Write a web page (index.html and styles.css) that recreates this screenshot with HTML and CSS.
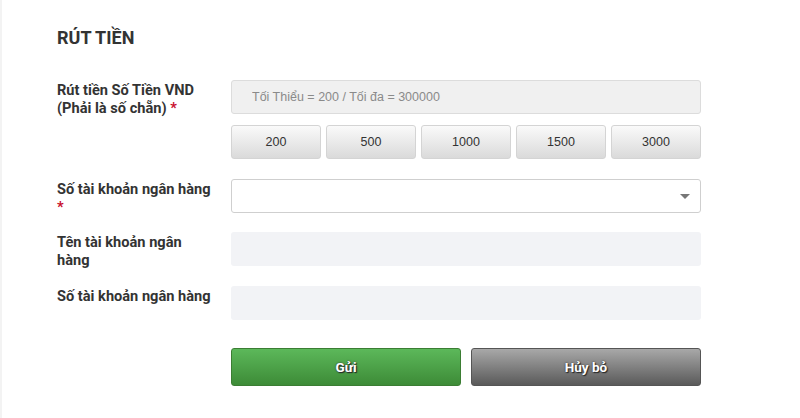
FILE: index.html
```html
<!DOCTYPE html>
<html>
<head>
<meta charset="utf-8">
<meta name="viewport" content="width=device-width, initial-scale=1">
<title>Rút tiền</title>
<link rel="stylesheet" href="styles.css">
</head>
<body>
  <div class="page">
    <h2 class="title">RÚT TIỀN</h2>
    <form class="form">
      <div class="row">
        <label class="label">Rút tiền Số Tiền VND (Phải là số chẵn) <span class="req">*</span></label>
        <div class="field">
          <input class="input amount" type="text" placeholder="Tối Thiểu = 200 / Tối đa = 300000">
          <div class="quick">
            <button type="button" class="quick-btn">200</button>
            <button type="button" class="quick-btn">500</button>
            <button type="button" class="quick-btn">1000</button>
            <button type="button" class="quick-btn">1500</button>
            <button type="button" class="quick-btn">3000</button>
          </div>
        </div>
      </div>
      <div class="row">
        <label class="label">Số tài khoản ngân hàng <span class="req">*</span></label>
        <div class="field">
          <div class="select">
            <span class="caret"></span>
          </div>
        </div>
      </div>
      <div class="row row-tight">
        <label class="label">Tên tài khoản ngân hàng</label>
        <div class="field">
          <input class="input readonly" type="text" readonly>
        </div>
      </div>
      <div class="row">
        <label class="label">Số tài khoản ngân hàng</label>
        <div class="field">
          <input class="input readonly" type="text" readonly>
        </div>
      </div>
      <div class="row actions">
        <div class="label"></div>
        <div class="field buttons">
          <button type="button" class="btn btn-send">Gửi</button>
          <button type="button" class="btn btn-cancel">Hủy bỏ</button>
        </div>
      </div>
    </form>
  </div>
</body>
</html>
```

FILE: styles.css
```css
body {
  margin: 0;
  background: #ffffff;
  font-family: Roboto, "Liberation Sans", sans-serif;
  color: #333333;
}
.page {
  border-left: 2px solid #f3f3f3;
  min-height: 418px;
  box-sizing: border-box;
  padding: 27px 0 0 55px;
}
.title {
  margin: 0 0 31px 0;
  font-size: 18px;
  font-weight: 700;
  line-height: 22px;
  color: #333333;
}
.form {
  display: flex;
  flex-direction: column;
  gap: 20px;
  width: 644px;
}
.row {
  display: flex;
  gap: 18px;
}
.row-tight {
  margin-top: -1px;
}
.label {
  width: 156px;
  flex: none;
  font-size: 14.6px;
  font-weight: 700;
  line-height: 18px;
  padding-top: 1px;
  margin-bottom: -6px;
  color: #333333;
}
.req {
  color: #c8102e;
}
.field {
  flex: 1;
  display: flex;
  flex-direction: column;
  gap: 11px;
}
.input {
  height: 34px;
  box-sizing: border-box;
  border-radius: 3px;
  font-family: "Liberation Sans", Arial, sans-serif;
  font-size: 12.5px;
  padding: 0 20px;
  outline: none;
}
.amount {
  background: #f0f0f0;
  border: 1px solid #dcdcdc;
}
.amount::placeholder {
  color: #8a8a8a;
}
.readonly {
  background: #f2f3f6;
  border: none;
}
.quick {
  display: flex;
  gap: 5px;
}
.quick-btn {
  flex: 1;
  height: 34px;
  border: 1px solid #d4d4d4;
  border-radius: 3px;
  background: linear-gradient(#fafafa, #dadada);
  font-family: "Liberation Sans", Arial, sans-serif;
  font-size: 12.5px;
  color: #333333;
}
.select {
  height: 34px;
  box-sizing: border-box;
  border: 1px solid #cfcfcf;
  border-radius: 3px;
  background: #ffffff;
  display: flex;
  justify-content: flex-end;
  align-items: center;
  padding-right: 10px;
}
.caret {
  width: 0;
  height: 0;
  border-left: 5px solid transparent;
  border-right: 5px solid transparent;
  border-top: 5px solid #777777;
}
.actions {
  margin-top: 8px;
}
.buttons {
  flex-direction: row;
  gap: 10px;
}
.btn {
  flex: 1;
  height: 38px;
  border-radius: 3px;
  font-family: Roboto, "DejaVu Sans", sans-serif;
  font-size: 13.5px;
  font-weight: 700;
  color: #ffffff;
  text-shadow: 0 0 2px #333333, 1px 1px 1px #222222;
}
.btn-send {
  border: 1px solid #3b7d33;
  background: linear-gradient(#5cb85a, #3d8b37);
}
.btn-cancel {
  border: 1px solid #555555;
  background: linear-gradient(#a8a8a8, #5a5a5a);
}
```
